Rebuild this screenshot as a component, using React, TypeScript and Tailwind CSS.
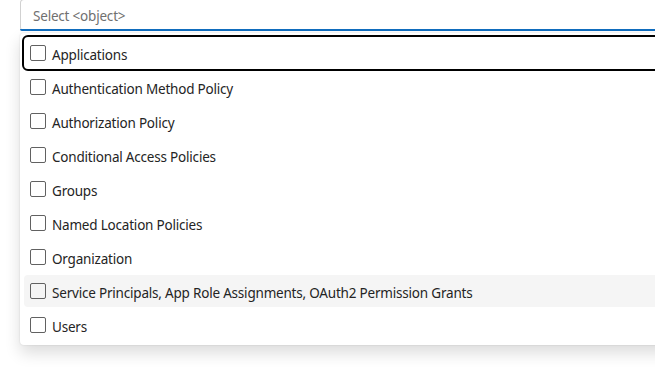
import { useState } from "react";

const options = [
  "Applications",
  "Authentication Method Policy",
  "Authorization Policy",
  "Conditional Access Policies",
  "Groups",
  "Named Location Policies",
  "Organization",
  "Service Principals, App Role Assignments, OAuth2 Permission Grants",
  "Users",
];

export default function App() {
  const [checked, setChecked] = useState<string[]>([]);
  const toggle = (o: string) =>
    setChecked((prev) => (prev.includes(o) ? prev.filter((x) => x !== o) : [...prev, o]));

  return (
    <div className="h-screen w-full overflow-hidden bg-white font-['Segoe_UI','Noto_Sans',sans-serif] text-[13.5px] tracking-[-0.2px] text-[#242424]">
      <div className="pl-[20px]">
        {/* combobox input */}
        <div className="relative -mt-[1px] flex h-[32px] w-[700px] items-center rounded-[4px] border border-[#d1d1d1] border-b-[#616161] bg-white pl-[12px]">
          <span className="relative top-[1px] text-[#707070]">Select &lt;object&gt;</span>
          <div className="absolute -bottom-[1px] -left-[1px] right-0 h-[2px] rounded-b-[4px] bg-[#0f6cbd]" />
        </div>

        {/* listbox */}
        <div className="mt-[2px] flex w-[700px] flex-col gap-[2px] rounded-[4px] bg-white p-[4px] shadow-[0_0_2px_rgba(0,0,0,0.12),0_8px_16px_rgba(0,0,0,0.14)]">
          {options.map((o, i) => (
            <div
              key={o}
              onClick={() => toggle(o)}
              className={
                "flex h-[32px] items-center gap-[6px] rounded-[4px] pl-[6px] " +
                (i === 0 ? "outline-2 outline-black " : "") +
                (i === 7 ? "bg-[#f5f5f5]" : "")
              }
            >
              <span className="flex h-[16px] w-[16px] shrink-0 items-center justify-center rounded-[2px] border border-[#616161]">
                {checked.includes(o) && (
                  <svg width="12" height="12" viewBox="0 0 12 12">
                    <path d="M2.5 6.2l2.3 2.3 4.7-5" fill="none" stroke="#616161" strokeWidth="1.3" />
                  </svg>
                )}
              </span>
              <span className="relative top-[2px] whitespace-nowrap">{o}</span>
            </div>
          ))}
        </div>
      </div>
    </div>
  );
}
